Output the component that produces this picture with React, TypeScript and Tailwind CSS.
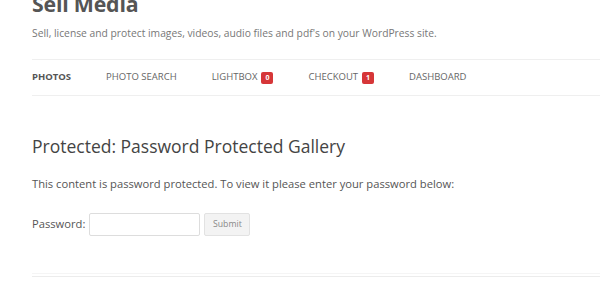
import React from "react";

const font = { fontFamily: '"Open Sans", "Noto Sans", sans-serif' };

function Badge({ n }: { n: string }) {
  return (
    <span className="ml-[4px] inline-flex h-[12px] w-[12px] items-center justify-center rounded-[2px] bg-[#d63638] text-[7px] font-bold leading-none text-white">
      {n}
    </span>
  );
}

export default function App() {
  return (
    <div className="h-[300px] w-[600px] overflow-hidden bg-white" style={font}>
      <div className="pl-[32px]">
        <div className="mt-[-10px] text-[21.3px] font-bold leading-[28px] text-[#555] tracking-[-0.2px]">Sell Media</div>
        <div className="mt-[8px] text-[10.3px] leading-[14px] text-[#777]">
          Sell, license and protect images, videos, audio files and pdf's on your WordPress site.
        </div>
        <div className="mt-[19px] flex h-[37px] items-center border-y border-[#efefef] text-[9.5px] uppercase text-[#666]">
          <span className="font-bold text-[#555]">Photos</span>
          <span className="ml-[35px]">Photo Search</span>
          <span className="ml-[35px] flex items-center">Lightbox<Badge n="0" /></span>
          <span className="ml-[35px] flex items-center">Checkout<Badge n="1" /></span>
          <span className="ml-[35px]">Dashboard</span>
        </div>
        <h1 className="mt-[38px] text-[17.5px] leading-[24px] text-[#444]">Protected: Password Protected Gallery</h1>
        <p className="mt-[19px] text-[11.2px] leading-[14px] text-[#555]">
          This content is password protected. To view it please enter your password below:
        </p>
        <div className="mt-[22px] flex items-center">
          <span className="text-[11.2px] text-[#555]">Password:</span>
          <input type="password" className="ml-[4px] h-[23px] w-[111px] rounded-[2px] border border-[#ddd] bg-white" />
          <button className="ml-[4px] h-[23px] w-[46px] rounded-[2px] border border-[#e2e2e2] bg-[#f3f3f3] text-[8.7px] text-[#888]">
            Submit
          </button>
        </div>
        <div className="mt-[37px] border-t border-[#f5f5f5]"></div>
        <div className="mt-[2px] border-t border-[#ececec]"></div>
      </div>
    </div>
  );
}
